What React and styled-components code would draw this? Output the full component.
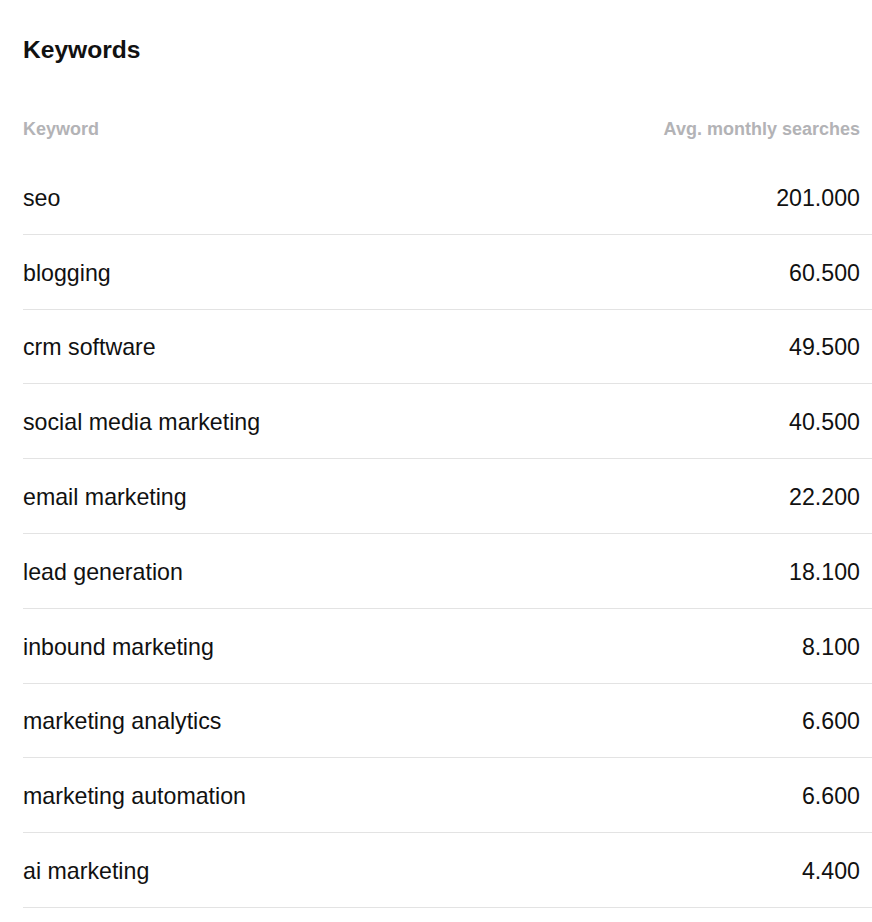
import styled, { createGlobalStyle } from "styled-components";

const GlobalStyle = createGlobalStyle`
  html, body {
    margin: 0;
    padding: 0;
    background: #fff;
  }
  body {
    font-family: "Liberation Sans", Arial, Helvetica, sans-serif;
    color: #111;
  }
`;

const Page = styled.div`
  padding: 35px 0 0 23px;
`;

const Title = styled.h2`
  margin: 0;
  font-size: 24.6px;
  line-height: 29px;
  font-weight: 700;
  color: #111;
`;

const Table = styled.div`
  margin-top: 54px;
  display: flex;
  flex-direction: column;
`;

const HeadRow = styled.div`
  display: flex;
  justify-content: space-between;
  align-items: center;
  padding-right: 12px;
  height: 22px;
  margin-bottom: 20px;
`;

const Th = styled.div`
  font-size: 18px;
  line-height: 22px;
  font-weight: 700;
  color: #b3b3b6;
`;

const Row = styled.div`
  display: flex;
  justify-content: space-between;
  align-items: center;
  box-sizing: border-box;
  height: 74.8px;
  padding: 3px 12px 0 0;
  border-bottom: 1px solid #e3e3e3;
`;

const Td = styled.div`
  font-size: 23.2px;
  line-height: 27px;
  color: #111;
  text-align: ${(props) => (props.right ? "right" : "left")};
`;

const keywords = [
  ["seo", "201.000"],
  ["blogging", "60.500"],
  ["crm software", "49.500"],
  ["social media marketing", "40.500"],
  ["email marketing", "22.200"],
  ["lead generation", "18.100"],
  ["inbound marketing", "8.100"],
  ["marketing analytics", "6.600"],
  ["marketing automation", "6.600"],
  ["ai marketing", "4.400"],
];

const App = () => {
  return (
    <Page>
      <GlobalStyle />
      <Title>Keywords</Title>
      <Table>
        <HeadRow>
          <Th>Keyword</Th>
          <Th>Avg. monthly searches</Th>
        </HeadRow>
        {keywords.map(([name, volume]) => (
          <Row key={name}>
            <Td>{name}</Td>
            <Td right>{volume}</Td>
          </Row>
        ))}
      </Table>
    </Page>
  );
};

export default App;
